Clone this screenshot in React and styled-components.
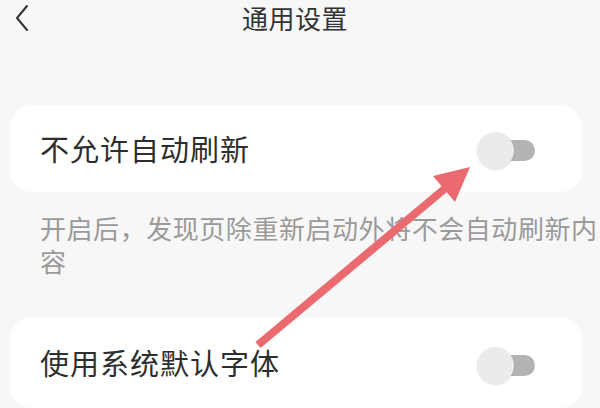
import React from 'react'
import styled, { createGlobalStyle } from 'styled-components'

const GlobalStyle = createGlobalStyle`
  html, body {
    margin: 0;
    padding: 0;
    background: #f7f7f7;
  }
  body {
    font-family: "Noto Sans CJK SC", "Noto Sans", sans-serif;
    width: 600px;
    height: 408px;
    overflow: hidden;
  }
`

const Page = styled.div`
  position: relative;
  width: 600px;
  height: 408px;
  background: #f7f7f7;
  display: flex;
  flex-direction: column;
`

const Header = styled.div`
  height: 36px;
  display: flex;
  align-items: center;
`

const BackButton = styled.div`
  width: 40px;
  height: 36px;
  display: flex;
  align-items: center;
  justify-content: center;
  padding-left: 2px;
`

const Title = styled.div`
  flex: 1;
  text-align: center;
  font-size: 26px;
  line-height: 34px;
  color: #333;
  letter-spacing: 0.5px;
`

const Spacer = styled.div`
  width: 52px;
`

const Card = styled.div`
  margin: ${p => p.$top}px 18px 0 10px;
  height: ${p => p.$height}px;
  background: #fff;
  border-radius: 22px;
  display: flex;
  align-items: center;
  justify-content: space-between;
  padding: 0 47px 0 30px;
`

const Label = styled.div`
  font-size: 29px;
  line-height: 1;
  color: #2e2e2e;
  letter-spacing: 1px;
`

const Hint = styled.div`
  padding: 19px 0 0 40px;
  font-size: 26px;
  line-height: 33px;
  color: #9a9a9a;
  letter-spacing: 0.55px;
`

const Switch = styled.div`
  position: relative;
  width: 58px;
  height: 38px;
  margin-top: ${p => p.$shift}px;
`

const Track = styled.div`
  position: absolute;
  right: 0;
  top: 8px;
  width: 46px;
  height: 21px;
  border-radius: 11px;
  background: #b3b3b3;
`

const Knob = styled.div`
  position: absolute;
  left: 0;
  top: 0;
  width: 37px;
  height: 37px;
  border-radius: 50%;
  background: #ebebeb;
  box-shadow: 0 1px 2px rgba(0, 0, 0, 0.12);
`

const Overlay = styled.svg`
  position: absolute;
  left: 0;
  top: 0;
  pointer-events: none;
`

const Toggle = ({ shift }) => (
  <Switch $shift={shift}>
    <Track />
    <Knob />
  </Switch>
)

export default function App() {
  return (
    <Page>
      <GlobalStyle />
      <Header>
        <BackButton>
          <svg width="14" height="28" viewBox="0 0 14 28">
            <polyline points="12,2 2,14 12,26" fill="none" stroke="#333" strokeWidth="2" strokeLinecap="round" strokeLinejoin="round" />
          </svg>
        </BackButton>
        <Title>通用设置</Title>
        <Spacer />
      </Header>

      <Card $top={69} $height={87}>
        <Label>不允许自动刷新</Label>
        <Toggle shift={4} />
      </Card>

      <Hint>开启后，发现页除重新启动外将不会自动刷新内容</Hint>

      <Card $top={40} $height={91}>
        <Label>使用系统默认字体</Label>
        <Toggle shift={6} />
      </Card>

      <Overlay width="600" height="408" viewBox="0 0 600 408">
        <line x1="258" y1="345" x2="448" y2="186" stroke="#ea6a70" strokeWidth="8" />
        <polygon points="470,167 455,202 433,176" fill="#ea6a70" />
      </Overlay>
    </Page>
  )
}
